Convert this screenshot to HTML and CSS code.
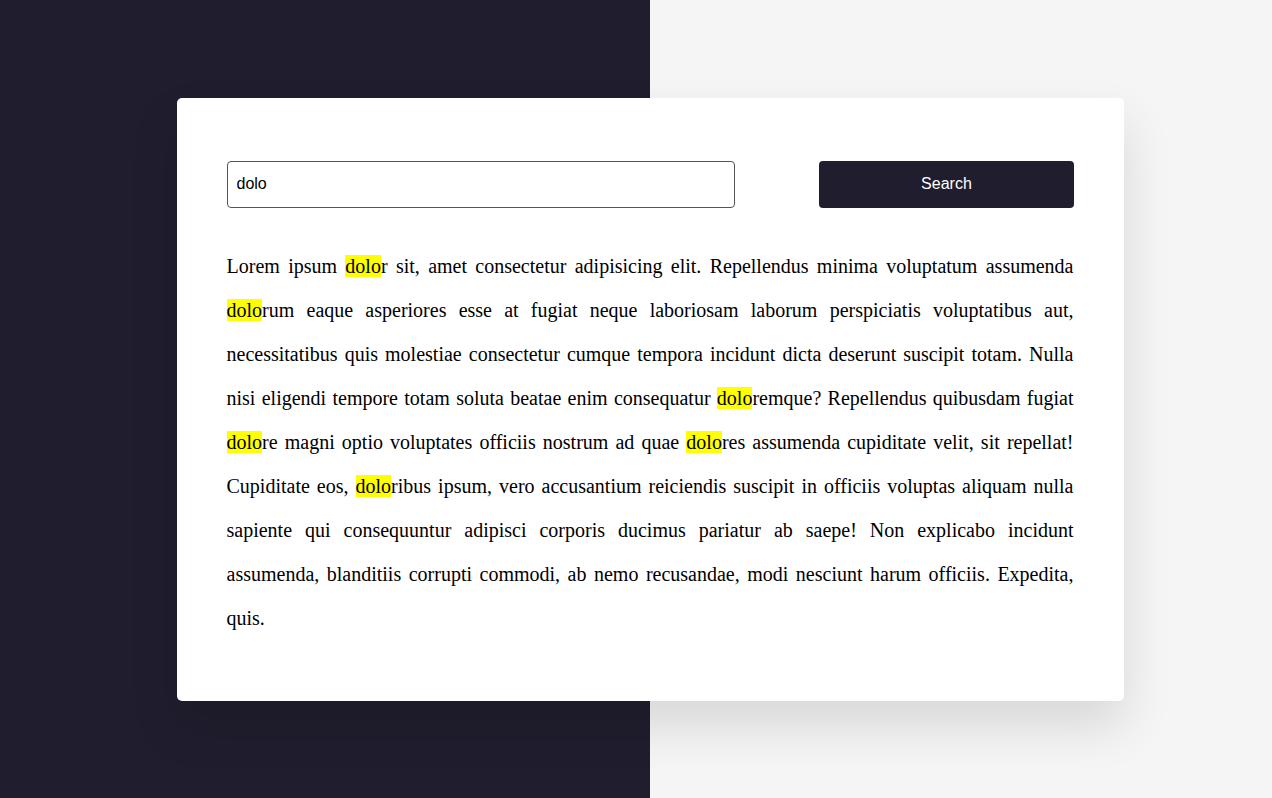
FILE: index.html
```html
<!DOCTYPE html>
<html lang="en">
<head>
<meta charset="utf-8">
<title>Search highlight</title>
<link rel="stylesheet" href="styles.css">
</head>
<body>
<div class="stage">
  <div class="card">
    <form class="search-row" onsubmit="return false">
      <input class="search-input" type="text" value="dolo">
      <button class="search-btn" type="button">Search</button>
    </form>
    <p class="text">Lorem ipsum <mark>dolo</mark>r sit, amet consectetur adipisicing elit. Repellendus minima voluptatum assumenda <mark>dolo</mark>rum eaque asperiores esse at fugiat neque laboriosam laborum perspiciatis voluptatibus aut, necessitatibus quis molestiae consectetur cumque tempora incidunt dicta deserunt suscipit totam. Nulla nisi eligendi tempore totam soluta beatae enim consequatur <mark>dolo</mark>remque? Repellendus quibusdam fugiat <mark>dolo</mark>re magni optio voluptates officiis nostrum ad quae <mark>dolo</mark>res assumenda cupiditate velit, sit repellat! Cupiditate eos, <mark>dolo</mark>ribus ipsum, vero accusantium reiciendis suscipit in officiis voluptas aliquam nulla sapiente qui consequuntur adipisci corporis ducimus pariatur ab saepe! Non explicabo incidunt assumenda, blanditiis corrupti commodi, ab nemo recusandae, modi nesciunt harum officiis. Expedita, quis.</p>
  </div>
</div>
</body>
</html>
```

FILE: styles.css
```css
html, body {
  margin: 0;
  padding: 0;
  overflow: hidden;
}

.stage {
  width: 1300px;
  height: 100vh;
  display: flex;
  align-items: center;
  justify-content: center;
  background: linear-gradient(90deg, #201e2e 50%, #f5f5f5 50%);
}

.card {
  width: 947px;
  box-sizing: border-box;
  padding: 63px 50px 61px;
  background: #ffffff;
  border-radius: 5px;
  box-shadow: 0 25px 50px rgba(0, 0, 0, 0.12);
}

.search-row {
  display: flex;
  justify-content: space-between;
  margin: 0;
}

.search-input {
  width: 60%;
  height: 47px;
  box-sizing: border-box;
  border: 1px solid #555555;
  border-radius: 4px;
  padding: 0 9px;
  font-family: "Liberation Sans", Arial, sans-serif;
  font-size: 16px;
  color: #000000;
  outline: none;
}

.search-btn {
  width: 30%;
  height: 47px;
  border: none;
  border-radius: 4px;
  background: #201e2e;
  color: #ffffff;
  font-family: "Liberation Sans", Arial, sans-serif;
  font-size: 16px;
  cursor: pointer;
}

.text {
  margin: 36px 0 0;
  font-family: "Liberation Serif", "Times New Roman", serif;
  font-size: 20px;
  line-height: 44px;
  text-align: justify;
  color: #000000;
}

.text mark {
  background: #ffff00;
  color: #000000;
}
```
